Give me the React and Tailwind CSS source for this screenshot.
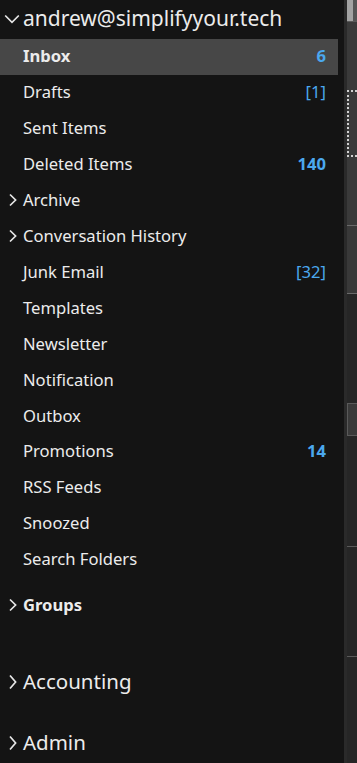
import React from 'react';

const ChevronDown = () => (
  <svg width="16" height="10" viewBox="0 0 16 10" className="shrink-0">
    <path d="M1.2 1.5 L8 8.3 L14.8 1.5" fill="none" stroke="#e6e6e6" strokeWidth="1.7" />
  </svg>
);

const ChevronRight = ({ h = 14 }) => (
  <svg width="11" height={h} viewBox={`0 0 11 ${h}`} className="shrink-0">
    <path
      d={`M3 1.5 L8.6 ${h / 2} L3 ${h - 1.5}`}
      fill="none"
      stroke="#e6e6e6"
      strokeWidth="1.7"
    />
  </svg>
);

const folders = [
  { name: 'Inbox', count: '6', bold: true, selected: true },
  { name: 'Drafts', count: '[1]' },
  { name: 'Sent Items' },
  { name: 'Deleted Items', count: '140', bold: true },
  { name: 'Archive', chevron: true },
  { name: 'Conversation History', chevron: true },
  { name: 'Junk Email', count: '[32]' },
  { name: 'Templates' },
  { name: 'Newsletter' },
  { name: 'Notification' },
  { name: 'Outbox' },
  { name: 'Promotions', count: '14', bold: true },
  { name: 'RSS Feeds' },
  { name: 'Snoozed' },
  { name: 'Search Folders' },
];

const FolderRow = ({ folder }) => (
  <div
    className={`flex items-center h-9 w-[338px] pr-[12px] pb-[1px] ${folder.selected ? 'bg-[#474747]' : ''}`}
  >
    <div className="w-[23px] flex justify-end pr-[5px]">
      {folder.chevron && <ChevronRight />}
    </div>
    <span
      className={`flex-1 text-[16.6px] text-[#ececec] ${folder.selected ? 'font-bold' : ''}`}
    >
      {folder.name}
    </span>
    {folder.count && (
      <span
        className={`text-[16.6px] text-[#4ba8ee] ${folder.bold ? 'font-bold' : ''}`}
      >
        {folder.count}
      </span>
    )}
  </div>
);

const App = () => {
  return (
    <div
      className="flex w-[357px] h-[763px] overflow-hidden bg-[#141414]"
      style={{ fontFamily: '"Noto Sans", "Open Sans", sans-serif' }}
    >
      {/* Folder pane */}
      <div className="w-[344px] flex flex-col">
        <div className="flex items-center h-[39px] pl-[4px] gap-[3px]">
          <ChevronDown />
          <span className="text-[21px] text-[#ececec] leading-none pb-[2px]">
            andrew@simplifyyour.tech
          </span>
        </div>
        {folders.map((f) => (
          <FolderRow key={f.name} folder={f} />
        ))}
        <div className="flex items-center h-9 mt-[10px] pb-[2px]">
          <div className="w-[23px] flex justify-end pr-[5px]">
            <ChevronRight />
          </div>
          <span className="text-[16.6px] font-bold text-[#ececec]">Groups</span>
        </div>
        <div className="flex items-center h-10 mt-[38px] pb-[1px]">
          <div className="w-[23px] flex justify-end pr-[5px]">
            <ChevronRight h={16} />
          </div>
          <span className="text-[20.5px] text-[#ececec]">Accounting</span>
        </div>
        <div className="flex items-center h-10 mt-[21px] pb-[1px]">
          <div className="w-[23px] flex justify-end pr-[5px]">
            <ChevronRight h={16} />
          </div>
          <span className="text-[20.5px] text-[#ececec]">Admin</span>
        </div>
      </div>

      {/* Divider */}
      <div className="w-[3px] bg-[#2a2a2a]" />

      {/* Peek of message list */}
      <div className="w-[10px] flex flex-col bg-[#262626]">
        <div className="h-[21px] flex">
          <div className="w-[6px] bg-[#a3a3a3]" />
          <div className="w-[4px] bg-[#555]" />
        </div>
        <div className="h-[1px] bg-[#5a5a5a]" />
        <div className="h-[203px] bg-[#3a3a3a] pt-[68px]">
          <div className="h-[67px] border-2 border-dotted border-[#d0d0d0] border-r-0" />
        </div>
        <div className="h-[1px] bg-[#6a6a6a]" />
        <div className="h-[67px] bg-[#393939]" />
        <div className="h-[1px] bg-[#6a6a6a]" />
        <div className="h-[109px]" />
        <div className="h-[33px] bg-[#3a3a3a] border border-r-0 border-[#5a5a5a]" />
        <div className="h-[110px]" />
        <div className="h-[1px] bg-[#5a5a5a]" />
        <div className="h-[109px]" />
        <div className="h-[1px] bg-[#5a5a5a]" />
      </div>
    </div>
  );
};

export default App;
